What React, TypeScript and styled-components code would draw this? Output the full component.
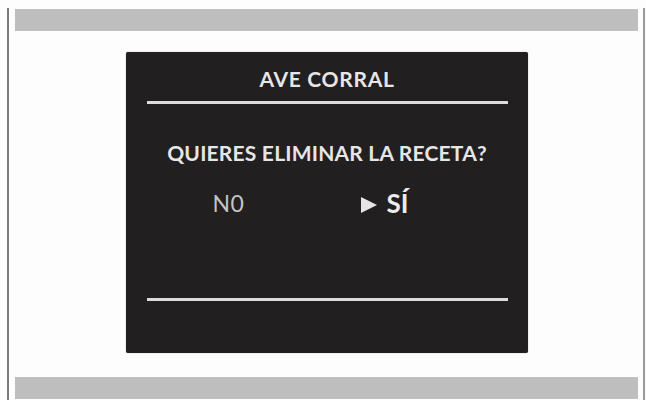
import React from 'react';
import styled, { createGlobalStyle } from 'styled-components';

const GlobalStyle = createGlobalStyle`
  html, body {
    margin: 0;
    padding: 0;
    background: #fdfdfd;
  }
  body {
    font-family: Lato, 'Noto Sans', sans-serif;
  }
`;

const Page = styled.div`
  width: 646px;
  height: 400px;
  padding: 8px 0 0 7px;
  box-sizing: border-box;
`;

const Frame = styled.div`
  width: 638px;
  height: 392px;
  box-sizing: border-box;
  border-left: 2px solid #7a7a7a;
  border-right: 2px solid #9a9a9a;
  padding: 1px 5px 0 6px;
  display: flex;
  flex-direction: column;
  align-items: center;
`;

const Bar = styled.div`
  align-self: stretch;
  height: 22px;
  background: #bebebe;
`;

const Panel = styled.div`
  width: 402px;
  height: 301px;
  margin: 21px 0 24px;
  box-sizing: border-box;
  background: #211f20;
  border-radius: 2px;
  box-shadow: 0 0 1px rgba(0, 0, 0, 0.6);
  padding: 17px 20px 0 21px;
  display: flex;
  flex-direction: column;
  color: #e6e6e6;
`;

const Title = styled.div`
  font-size: 21px;
  font-weight: 700;
  text-align: center;
  line-height: 20px;
  height: 32px;
  letter-spacing: 0.7px;
`;

const Rule = styled.div<{ $gap: number }>`
  height: 3px;
  background: #dcdcdc;
  margin-top: ${(p) => p.$gap}px;
`;

const Question = styled.div`
  margin-top: 39px;
  font-size: 21px;
  font-weight: 700;
  line-height: 20px;
  text-align: center;
  letter-spacing: 0.2px;
`;

const Options = styled.div`
  margin-top: 23px;
  display: flex;
  align-items: flex-end;
  height: 30px;
`;

const Option = styled.div<{ $selected?: boolean }>`
  display: flex;
  align-items: baseline;
  gap: 9px;
  font-size: ${(p) => (p.$selected ? 26 : 23)}px;
  font-weight: ${(p) => (p.$selected ? 700 : 400)};
  color: ${(p) => (p.$selected ? '#ececec' : '#c4c4c4')};
  line-height: 26px;
`;

const NoOption = styled(Option)`
  margin-left: 66px;
  letter-spacing: 0.5px;
`;

const YesOption = styled(Option)`
  margin-left: 117px;
`;

const Arrow = () => (
  <svg width="16" height="16" viewBox="0 0 16 16">
    <polygon points="0,0 16,8 0,16" fill="#e6e6e6" />
  </svg>
);

export default function App() {
  return (
    <>
      <GlobalStyle />
      <Page>
        <Frame>
          <Bar />
          <Panel>
            <Title>AVE CORRAL</Title>
            <Rule $gap={0} />
            <Question>QUIERES ELIMINAR LA RECETA?</Question>
            <Options>
              <NoOption>N0</NoOption>
              <YesOption $selected>
                <Arrow />
                SÍ
              </YesOption>
            </Options>
            <Rule $gap={82} />
          </Panel>
          <Bar />
        </Frame>
      </Page>
    </>
  );
}
